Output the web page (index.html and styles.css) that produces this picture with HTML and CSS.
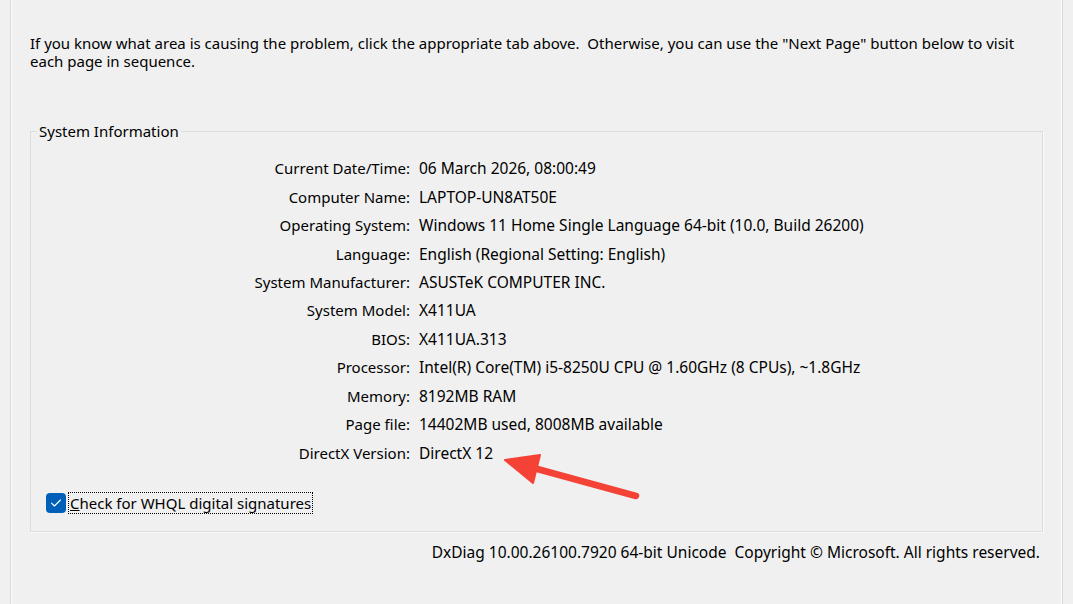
FILE: index.html
```html
<!DOCTYPE html>
<html>
<head>
<meta charset="utf-8">
<link rel="stylesheet" href="styles.css">
</head>
<body>
<div class="panel">
  <p class="intro">If you know what area is causing the problem, click the appropriate tab above.&nbsp; Otherwise, you can use the "Next Page" button below to visit each page in sequence.</p>
  <fieldset class="group">
    <legend>System Information</legend>
    <div class="info">
      <span class="lbl">Current Date/Time:</span><span class="val">06 March 2026, 08:00:49</span>
      <span class="lbl">Computer Name:</span><span class="val">LAPTOP-UN8AT50E</span>
      <span class="lbl">Operating System:</span><span class="val">Windows 11 Home Single Language 64-bit (10.0, Build 26200)</span>
      <span class="lbl">Language:</span><span class="val">English (Regional Setting: English)</span>
      <span class="lbl">System Manufacturer:</span><span class="val">ASUSTeK COMPUTER INC.</span>
      <span class="lbl">System Model:</span><span class="val">X411UA</span>
      <span class="lbl">BIOS:</span><span class="val">X411UA.313</span>
      <span class="lbl">Processor:</span><span class="val">Intel(R) Core(TM) i5-8250U CPU @ 1.60GHz (8 CPUs), ~1.8GHz</span>
      <span class="lbl">Memory:</span><span class="val">8192MB RAM</span>
      <span class="lbl">Page file:</span><span class="val">14402MB used, 8008MB available</span>
      <span class="lbl">DirectX Version:</span><span class="val">DirectX 12</span>
    </div>
    <label class="check">
      <span class="box"><svg width="20" height="20" viewBox="0 0 20 20"><path d="M5.5 10.2 L8.4 13 L14.5 7" fill="none" stroke="#fff" stroke-width="1.1" stroke-linecap="round" stroke-linejoin="round"/></svg></span>
      <span class="check-text"><u>C</u>heck for WHQL digital signatures</span>
    </label>
  </fieldset>
  <div class="footer">DxDiag 10.00.26100.7920 64-bit Unicode&nbsp; Copyright © Microsoft. All rights reserved.</div>
</div>
<svg class="arrow" width="1073" height="604" viewBox="0 0 1073 604">
  <line x1="636" y1="496" x2="530" y2="467" stroke="#f44336" stroke-width="6.5" stroke-linecap="round"/>
  <polygon points="505,460 540,455 533,483" fill="#f44336" stroke="#f44336" stroke-width="2" stroke-linejoin="round"/>
</svg>
</body>
</html>
```

FILE: styles.css
```css
html, body {
  margin: 0;
  padding: 0;
}
body {
  background: #f0f0f0;
  font-family: "Noto Sans", "Open Sans", sans-serif;
  font-size: 15px;
  color: #000;
  width: 1073px;
  height: 604px;
  overflow: hidden;
  position: relative;
}
.panel {
  box-sizing: border-box;
  margin: 0 10px;
  height: 604px;
  border-left: 1px solid #d9d9d9;
  border-right: 1px solid #d9d9d9;
  box-shadow: inset 1px 0 #fbfbfb, inset -1px 0 #fbfbfb;
  padding: 34px 19px 0 19px;
}
.intro {
  margin: 0;
  line-height: 18px;
}
.group {
  margin: 51px 0 0 0;
  padding: 0 6px 18px 6px;
  border: 1px solid #dcdcdc;
  box-shadow: 1px 1px 0 #fafafa;
  min-width: 0;
}
.group legend {
  padding: 0 2px;
  line-height: 20px;
}
.info {
  display: grid;
  grid-template-columns: 373px 1fr;
  column-gap: 9px;
  margin-top: 13px;
  grid-auto-rows: 28.45px;
  align-items: center;
}
.lbl {
  text-align: right;
}
.val {
  font-size: 15.5px;
}
.check {
  display: flex;
  align-items: center;
  gap: 3px;
  margin-top: 26px;
  margin-left: 9px;
}
.box {
  width: 20px;
  height: 20px;
  border-radius: 4px;
  background: #005fb8;
  display: flex;
}
.check-text {
  outline: 1px dotted #000;
  padding: 0 1px;
  line-height: 20px;
}
.footer {
  text-align: right;
  padding-right: 3px;
  margin-top: 10px;
  line-height: 20px;
  font-size: 15.5px;
}
.arrow {
  position: absolute;
  left: 0;
  top: 0;
}
```
